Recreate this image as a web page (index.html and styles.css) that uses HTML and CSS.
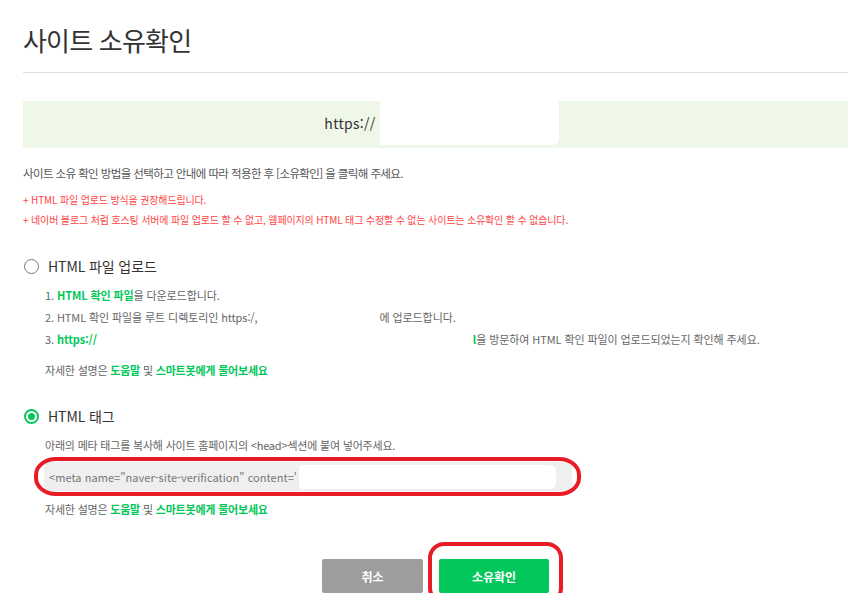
FILE: index.html
```html
<!DOCTYPE html>
<html lang="ko">
<head>
<meta charset="utf-8">
<link rel="stylesheet" href="styles.css">
</head>
<body>
<div class="page">
  <header class="header">
    <h1 class="title">사이트 소유확인</h1>
  </header>
  <div class="site-box">
    <span class="site-url">https://</span><span class="redact redact-site"></span>
  </div>
  <p class="intro">사이트 소유 확인 방법을 선택하고 안내에 따라 적용한 후 [소유확인] 을 클릭해 주세요.</p>
  <p class="note note-first">+ HTML 파일 업로드 방식을 권장해드립니다.</p>
  <p class="note">+ 네이버 블로그 처럼 호스팅 서버에 파일 업로드 할 수 없고, 웹페이지의 HTML 태그 수정할 수 없는 사이트는 소유확인 할 수 없습니다.</p>

  <section class="method">
    <div class="radio-row">
      <span class="radio"></span>
      <span class="radio-label">HTML 파일 업로드</span>
    </div>
    <ol class="steps">
      <li>1. <b class="green">HTML 확인 파일</b>을 다운로드합니다.</li>
      <li>2. HTML 확인 파일을 루트 디렉토리인 https:/,<span class="gap gap-2"></span>에 업로드합니다.</li>
      <li>3. <b class="green">https://</b><span class="gap gap-3"></span><b class="green">l</b>을 방문하여 HTML 확인 파일이 업로드되었는지 확인해 주세요.</li>
    </ol>
    <p class="help help-first">자세한 설명은 <b class="green">도움말</b> 및 <b class="green">스마트봇에게 물어보세요</b></p>
  </section>

  <section class="method method-tag">
    <div class="radio-row">
      <span class="radio radio-on"></span>
      <span class="radio-label">HTML 태그</span>
    </div>
    <p class="tag-desc">아래의 메타 태그를 복사해 사이트 홈페이지의 &lt;head&gt;섹션에 붙여 넣어주세요.</p>
    <div class="meta-wrap">
      <div class="meta-box"><span class="meta-text">&lt;meta name="naver-site-verification" content='</span><span class="redact redact-meta"></span></div>
      <span class="mark mark-meta"></span>
    </div>
    <p class="help help-second">자세한 설명은 <b class="green">도움말</b> 및 <b class="green">스마트봇에게 물어보세요</b></p>
  </section>

  <div class="actions">
    <button class="btn btn-cancel">취소</button>
    <div class="confirm-wrap">
      <button class="btn btn-confirm">소유확인</button>
      <span class="mark mark-btn"></span>
    </div>
  </div>
</div>
</body>
</html>
```

FILE: styles.css
```css
* { box-sizing: border-box; }
html, body { margin: 0; padding: 0; background: #fff; }
body {
  font-family: "Noto Sans CJK KR", "Noto Sans", sans-serif;
  color: #666;
}
.page {
  width: 848px;
  padding-left: 23px;
}
.header {
  padding-top: 20px;
  padding-bottom: 12px;
  border-bottom: 1px solid #e0e0e0;
}
.title {
  margin: 0;
  font-size: 26px;
  line-height: 40px;
  font-weight: 400;
  color: #333;
  letter-spacing: -0.8px;
}
.site-box {
  margin-top: 28px;
  height: 47px;
  background: #eff7e9;
  display: flex;
  justify-content: center;
  align-items: flex-start;
  padding-left: 12px;
}
.site-url {
  font-size: 14px;
  color: #333;
  line-height: 45px;
  margin-right: 4px;
  letter-spacing: 0.3px;
}
.redact {
  display: inline-block;
  background: #fff;
}
.redact-site {
  width: 179px;
  height: 44px;
  border-radius: 0 4px 6px 0;
}
.intro {
  margin: 16px 0 0;
  font-size: 11.5px;
  line-height: 18px;
  letter-spacing: -0.6px;
  color: #555;
}
.note {
  margin: 0;
  font-size: 10px;
  line-height: 20px;
  letter-spacing: -0.15px;
  color: #ff4545;
}
.note-first { margin-top: 8px; }
.method { margin-top: 26px; }
.radio-row {
  display: flex;
  align-items: center;
  height: 20px;
}
.radio {
  width: 15px;
  height: 15px;
  border: 1.5px solid #777;
  border-radius: 50%;
  margin-left: 1px;
  margin-right: 9px;
  display: flex;
  align-items: center;
  justify-content: center;
}
.radio-on {
  border: 2px solid #03c75a;
}
.radio-on::after {
  content: "";
  width: 7px;
  height: 7px;
  border-radius: 50%;
  background: #03c75a;
}
.radio-label {
  font-size: 14px;
  color: #333;
  letter-spacing: -0.1px;
}
.steps {
  list-style: none;
  margin: 8px 0 0;
  padding: 0 0 0 22px;
}
.steps li {
  font-size: 11px;
  line-height: 22px;
  letter-spacing: -0.1px;
  color: #666;
  white-space: nowrap;
}
.green {
  color: #03c75a;
  font-weight: 700;
}
.gap { display: inline-block; }
.gap-2 { width: 122px; }
.gap-3 { width: 376px; }
.help {
  margin: 0;
  padding-left: 22px;
  font-size: 11px;
  line-height: 20px;
  letter-spacing: -0.2px;
  color: #666;
}
.help-first { margin-top: 10px; }
.tag-desc {
  margin: 10px 0 0;
  padding-left: 22px;
  font-size: 11px;
  line-height: 18px;
  letter-spacing: -0.2px;
  color: #666;
}
.meta-wrap {
  position: relative;
  margin-top: 8px;
  margin-left: 21px;
  width: 528px;
}
.meta-box {
  height: 29px;
  background: #efefef;
  display: flex;
  align-items: center;
  padding-left: 5px;
}
.meta-text {
  font-size: 11px;
  color: #777;
  letter-spacing: 0.05px;
  white-space: nowrap;
}
.redact-meta {
  width: 257px;
  height: 24px;
  border-radius: 3px 6px 6px 3px;
  margin-left: 2px;
}
.mark {
  position: absolute;
  border: 4px solid #e81c24;
  pointer-events: none;
}
.mark-meta {
  left: -10px;
  right: -9px;
  top: -5px;
  bottom: -5px;
  border-radius: 22px / 18px;
}
.help-second { margin-top: 9px; line-height: 18px; }
.actions {
  margin-top: 41px;
  display: flex;
  justify-content: center;
  gap: 16px;
}
.btn {
  height: 34px;
  border: 0;
  border-radius: 2px;
  color: #fff;
  font-family: "Noto Sans CJK KR", sans-serif;
  font-size: 12px;
  font-weight: 700;
}
.btn-cancel {
  width: 101px;
  background: #9d9d9d;
}
.confirm-wrap { position: relative; }
.btn-confirm {
  width: 110px;
  background: #03c75a;
}
.mark-btn {
  left: -11px;
  right: -14px;
  top: -17px;
  bottom: -11px;
  border-radius: 16px;
}
```
